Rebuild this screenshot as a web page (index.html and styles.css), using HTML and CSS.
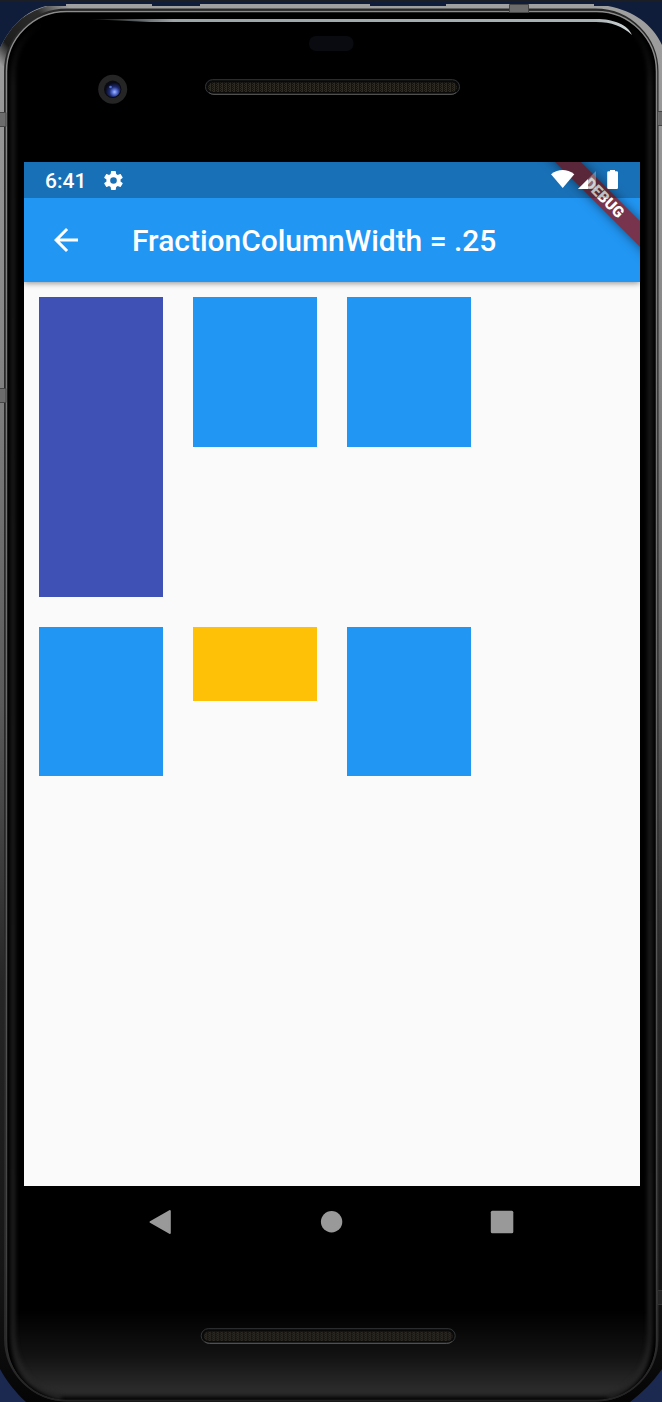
FILE: index.html
```html
<!DOCTYPE html>
<html lang="en">
<head>
<meta charset="utf-8">
<title>FractionColumnWidth</title>
<link rel="stylesheet" href="styles.css">
</head>
<body>
<div class="device">
  <svg class="frame" viewBox="0 0 662 1402" aria-hidden="true">
    <defs>
      <linearGradient id="metal" x1="0" y1="0" x2="0" y2="1">
        <stop offset="0" stop-color="#a0a0a0"/><stop offset=".25" stop-color="#858585"/>
        <stop offset=".5" stop-color="#5a5a5a"/><stop offset=".7" stop-color="#262626"/>
        <stop offset=".92" stop-color="#141414"/><stop offset="1" stop-color="#050505"/>
      </linearGradient>
      <linearGradient id="rim" x1="0" y1="0" x2="0" y2="1">
        <stop offset="0" stop-color="#8c8c8c"/><stop offset=".5" stop-color="#6a6a6a"/>
        <stop offset=".9" stop-color="#404040"/><stop offset="1" stop-color="#222"/>
      </linearGradient>
      <linearGradient id="chin" x1="0" y1="1310" x2="0" y2="1400" gradientUnits="userSpaceOnUse">
        <stop offset="0" stop-color="#000"/><stop offset=".5" stop-color="#121212"/><stop offset=".9" stop-color="#2c2c2c"/><stop offset="1" stop-color="#222"/>
      </linearGradient>
      <linearGradient id="glow" x1="0" y1="20" x2="0" y2="1400" gradientUnits="userSpaceOnUse">
        <stop offset="0" stop-color="#1c1c1c" stop-opacity="0"/><stop offset=".05" stop-color="#1c1c1c"/><stop offset="1" stop-color="#262626"/>
      </linearGradient>
      <linearGradient id="shade" x1="2" y1="66" x2="70" y2="8" gradientUnits="userSpaceOnUse">
        <stop offset="0" stop-color="#1c1c1c" stop-opacity="0"/><stop offset=".2" stop-color="#1c1c1c"/>
        <stop offset=".7" stop-color="#2c2c2c"/><stop offset="1" stop-color="#444" stop-opacity="0"/>
      </linearGradient>
      <linearGradient id="shine" x1="86" y1="0" x2="632" y2="0" gradientUnits="userSpaceOnUse">
        <stop offset="0" stop-color="#9ba4a6" stop-opacity="0"/><stop offset=".16" stop-color="#9ba4a6"/>
        <stop offset=".93" stop-color="#a9b2b4"/><stop offset="1" stop-color="#d2d8d8"/>
      </linearGradient>
      <radialGradient id="lens" cx=".62" cy=".67" r=".6">
        <stop offset="0" stop-color="#a8bcff"/><stop offset=".25" stop-color="#5a73d8"/>
        <stop offset=".55" stop-color="#1d2a70"/><stop offset="1" stop-color="#080a18"/>
      </radialGradient>
      <pattern id="mesh" width="4" height="2" patternUnits="userSpaceOnUse">
        <path fill="#15130f" d="M0 0h4v2H0z"/><path fill="#2d2a24" d="M0 0h1v1H0zM2 0h1v1H2zM1 1h1v1H1zM2 1h1v1H2z"/>
      </pattern>
      <filter id="soft" x="-50" y="-20" width="762" height="1442" filterUnits="userSpaceOnUse" color-interpolation-filters="sRGB"><feGaussianBlur stdDeviation="2"/></filter>
      <clipPath id="body"><rect x="8" y="14" width="647" height="1386" rx="58"/></clipPath>
      <clipPath id="outer"><path id="shell" d="M0 48C7 34 19 13 46 6h20V4h86v2h48V4h170v2h76V4h148v2h14c26 5 44 18 54 39v1324c-10 14-19 23-32 33H26C15 1392 6 1380 0 1369z"/></clipPath>
    </defs>
    <path fill="#101d3a" d="M0 0h662v1402H0z"/>
    <path fill="#1b1e25" d="M0 0h662v2H0z"/>
    <path fill="#1b2850" d="M0 1330h60v72H0zM602 1330h60v72h-60z"/>
    <use href="#shell" fill="url(#metal)"/>
    <path clip-path="url(#outer)" fill="none" stroke="url(#shade)" stroke-width="12" d="M1 66Q8 16 70 7"/>
    <rect x="5" y="9.500" width="652.500" height="1391" rx="62" fill="#000" stroke="#282828" stroke-width="2"/>
    <rect x="6.500" y="11.500" width="650" height="1389" rx="60" fill="none" stroke="url(#rim)" stroke-width="1.500"/>
    <rect x="8" y="13.500" width="647" height="1386" rx="58" fill="#000"/>
    <g clip-path="url(#body)">
      <path fill="url(#chin)" d="M12 1310h638v35q0 40-42 52H56q-44-12-44-52z" filter="url(#soft)"/>
      <path fill="none" stroke="url(#glow)" stroke-width="4" filter="url(#soft)" d="M40 24Q13 42 13 76v1260q2 47 48 62M624 24q26 16 26 54v1255q0 47-42 65"/>
    </g>
    <path fill="url(#shine)" d="M86 19h510c18 0 32 6 36 16-10-9-20-13-36-13H150z"/>
    <path fill="#6c6c6c" stroke="#454545" d="M509.500 4.500h19v8h-19z"/>
    <path fill="#6c6c6c" stroke="#454545" d="M-1 112.500h7v14h-7zM657.500 111.500H663v14h-5.500zM-1 388.500h7v14h-7z"/>
    <path fill="#252525" stroke="#333" d="M657.500 1290.500H663v14h-5.500z"/>
    <circle cx="112.700" cy="89.300" r="14.500" fill="#262525"/>
    <circle cx="112.700" cy="89.300" r="8.700" fill="#0b0b0f"/>
    <circle cx="112.700" cy="89.300" r="7.800" fill="url(#lens)"/>
    <circle cx="110.500" cy="87" r="1.300" fill="#536fcf"/>
    <rect x="309" y="36" width="44.500" height="15" rx="7" fill="#090b10"/>
    <g id="grille">
      <rect x="205.500" y="79.700" width="254" height="14.300" rx="7" fill="#090909" stroke="#343638"/>
      <path d="M209 92.500q2 2 5 2h237q3 0 5-2" fill="none" stroke="#50514e"/>
      <rect x="208" y="82.500" width="249" height="9.500" rx="4.700" fill="url(#mesh)"/>
    </g>
    <use href="#grille" x="-4.300" y="1249"/>
  </svg>

  <main class="screen">
    <header class="status">
      <span class="clock">6:41</span>
      <svg class="gear" viewBox="2 2 20 20"><path fill="#fff" fill-rule="evenodd" d="M19.400 13c.1-.7.1-1.300 0-2l2.100-1.600c.2-.2.2-.4.100-.7l-2-3.400c-.1-.2-.4-.3-.6-.2l-2.500 1c-.5-.4-1.100-.7-1.700-1l-.4-2.600c0-.3-.2-.5-.5-.5h-4c-.2 0-.4.200-.5.500L9 5.100c-.6.300-1.100.6-1.700 1L4.900 5.100c-.3-.1-.5 0-.6.200l-2 3.400c-.1.300-.1.500.1.700L4.600 11c-.1.700-.1 1.300 0 2l-2.200 1.600c-.2.200-.2.400-.1.700l2 3.400c.1.200.4.300.6.200l2.400-1c.6.400 1.100.7 1.700 1l.4 2.600c.1.300.3.500.5.500h4c.3 0 .5-.2.500-.5l.4-2.600c.6-.3 1.200-.6 1.700-1l2.500 1c.2.100.5 0 .6-.2l2-3.400c.1-.3.1-.5-.1-.7zM12 15.500a3.500 3.500 0 1 1 0-7 3.500 3.500 0 0 1 0 7z"/></svg>
      <svg class="signals" viewBox="0 0 70 22">
        <path fill="#fff" d="M0 5.200Q11.700-3 23.300 5.200L11.700 19z"/>
        <path fill="#fff" fill-opacity=".3" d="M27 20L45 2v18z"/>
        <path fill="#fff" d="M27 20L37 10v10z"/>
        <path fill="#fff" d="M57.500 2.200H59V1h5v1.200h1.700q1.300 0 1.300 1.300v15.200q0 1.300-1.300 1.300h-8.200q-1.300 0-1.300-1.300V3.500q0-1.300 1.300-1.300z"/>
      </svg>
    </header>
    <div class="appbar">
      <svg class="back" viewBox="4 4 16 16"><path fill="#fff" d="M20 11H7.830l5.590-5.590L12 4l-8 8 8 8 1.410-1.410L7.830 13H20z"/></svg>
      <h1 class="title">FractionColumnWidth = .25</h1>
    </div>
    <div class="table">
      <div class="cell tall"></div><div class="cell"></div><div class="cell"></div>
      <div class="cell"></div><div class="cell short"></div><div class="cell"></div>
    </div>
    <div class="debug">DEBUG</div>
  </main>

  <nav class="nav">
    <svg viewBox="0 0 24 26"><path fill="#999" stroke="#999" stroke-width="2" stroke-linejoin="round" d="M2.500 13L21.800 2v22z"/></svg>
    <svg viewBox="0 0 24 26"><circle cx="12.600" cy="12.700" r="10.700" fill="#999"/></svg>
    <svg viewBox="0 0 24 26"><rect x=".8" y="1.800" width="22.500" height="22.500" rx="1.500" fill="#999"/></svg>
  </nav>
</div>
</body>
</html>
```
FILE: styles.css
```css
body { margin: 0; background: #000; font-family: Roboto, sans-serif; }
svg { display: block; }
.device {
  position: relative;
  box-sizing: border-box;
  width: 662px;
  height: 1402px;
  padding: 162px 22px 0 24px;
  overflow: hidden;
}
.frame { position: absolute; top: 0; left: 0; width: 662px; height: 1402px; }
.screen { position: relative; height: 1024px; overflow: hidden; background: #fafafa; }
.status {
  position: relative;
  z-index: 2;
  display: flex;
  align-items: center;
  box-sizing: border-box;
  height: 36px;
  padding: 0 19px 0 21px;
  background: rgba(0, 0, 0, .25);
  color: #fff;
}
.clock { width: 59px; font-size: 21px; font-weight: 500; line-height: 36px; padding-top: 2px; }
.gear { width: 19px; height: 19px; }
.signals { width: 70px; height: 22px; margin-left: auto; }
.appbar {
  position: relative;
  display: flex;
  align-items: center;
  height: 84px;
  margin-top: -36px;
  padding: 36px 0 0 30px;
  background: #2196f3;
  color: #fff;
  box-shadow: 0 1px 6px rgba(0, 0, 0, .45);
}
.back { width: 24px; height: 24px; }
.title { margin: 2px 0 0 54px; font-size: 30px; font-weight: 500; line-height: 36px; letter-spacing: -.03px; white-space: nowrap; }
.table {
  display: grid;
  grid-template-columns: repeat(3, 124px);
  gap: 30px;
  align-items: start;
  padding: 15px;
}
.cell { height: 149.500px; background: #2196f3; }
.tall { height: 299.500px; background: #3f51b5; }
.short { height: 74.500px; background: #ffc107; }
.debug {
  position: absolute;
  left: 480px;
  top: 26.500px;
  width: 200px;
  height: 18px;
  transform: rotate(45deg);
  background: rgba(141, 28, 34, .8);
  box-shadow: 0 0 11px rgba(0, 0, 0, .5);
  color: #fff;
  font-size: 15.300px;
  font-weight: 900;
  line-height: 18px;
  text-align: center;
}
.nav { position: relative; display: flex; justify-content: space-between; padding: 23px 126px 0 124px; }
.nav svg { width: 24px; height: 26px; }
```
